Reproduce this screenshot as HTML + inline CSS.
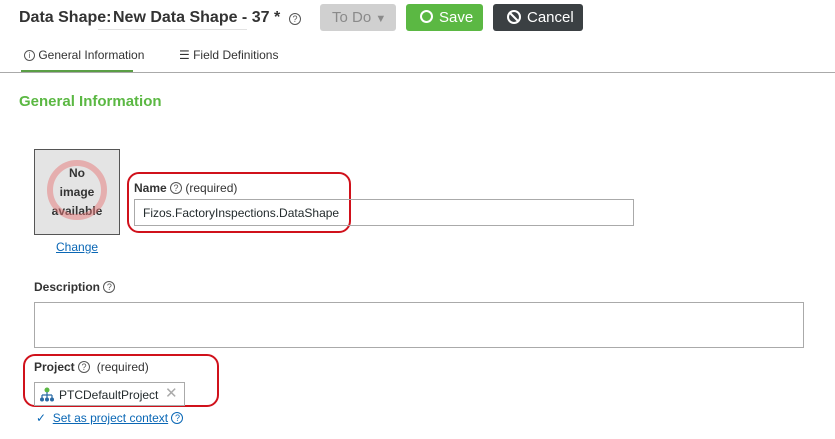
<!DOCTYPE html>
<html><head><style>
*{box-sizing:border-box}
body{margin:0;width:835px;height:439px;background:#fff;font-family:"Liberation Sans",sans-serif;color:#232b2d;position:relative;overflow:hidden}
.a{position:absolute}
.q{display:inline-block;width:12px;height:12px;border:1px solid #555;border-radius:50%;font-size:9px;line-height:10px;text-align:center;color:#555;vertical-align:1px}
.btn{position:absolute;top:4px;height:27px;border-radius:3px;font-size:15px;line-height:27px;color:#fff}
a{color:#0a67b5}
</style></head><body>
<div class="a" style="left:19px;top:9px;font-size:16px;font-weight:bold;color:#333">Data Shape:</div>
<div class="a" style="left:98px;top:8px;width:149px;height:22px;border-bottom:1px solid #e2e2e2;"></div>
<div class="a" style="left:113px;top:9px;font-size:16px;font-weight:bold;color:#333">New Data Shape - 37 *</div>
<div class="a" style="left:289px;top:10px"><span class="q">?</span></div>
<div class="btn" style="left:320px;width:76px;background:#d0d0d0;color:#8a8a8a;padding-left:12px">To Do <span style="font-size:11px">&#9660;</span></div>
<div class="btn" style="left:406px;width:77px;background:#5bb843;padding-left:14px"><span style="display:inline-block;width:13px;height:13px;border:2px solid #fff;border-radius:50%;vertical-align:-1px;margin-right:6px"></span>Save</div>
<div class="btn" style="left:493px;width:90px;background:#3b4043;padding-left:14px"><span style="display:inline-block;width:14px;height:14px;border:2px solid #fff;border-radius:50%;vertical-align:-2px;margin-right:6px;position:relative"><span style="position:absolute;left:4px;top:-1px;width:2px;height:12px;background:#fff;transform:rotate(-45deg)"></span></span>Cancel</div>
<div class="a" style="left:24px;top:48px;font-size:12px;color:#333"><span class="q" style="width:11px;height:11px;font-size:8px;line-height:9px">i</span> General Information</div>
<div class="a" style="left:179px;top:48px;font-size:12px;color:#333"><span style="font-size:12px">&#9776;</span> Field Definitions</div>
<div class="a" style="left:21px;top:70px;width:112px;height:3px;background:#5a9e45"></div>
<div class="a" style="left:0;top:72px;width:835px;height:1px;background:#aaa"></div>
<div class="a" style="left:19px;top:93px;font-size:15px;font-weight:bold;color:#5bb843">General Information</div>
<div class="a" style="left:34px;top:149px;width:86px;height:86px;border:1px solid #555;background:#e4e4e4;text-align:center;font-size:12px;font-weight:bold;color:#333;line-height:19px;padding-top:14px">
<div class="a" style="left:12px;top:10px;width:60px;height:60px;border:6px solid rgba(230,120,120,.5);border-radius:50%"></div>No<br>image<br>available</div>
<div class="a" style="left:56px;top:240px;font-size:12px"><a href="#">Change</a></div>
<div class="a" style="left:127px;top:172px;width:224px;height:61px;border:2px solid #d0111b;border-radius:12px"></div>
<div class="a" style="left:134px;top:181px;font-size:12px;color:#333"><b>Name</b> <span class="q">?</span> (required)</div>
<div class="a" style="left:134px;top:199px;width:500px;height:27px;border:1px solid #aaa;font-size:12px;padding:6px 8px">Fizos.FactoryInspections.DataShape</div>
<div class="a" style="left:34px;top:280px;font-size:12px;color:#333"><b>Description</b> <span class="q">?</span></div>
<div class="a" style="left:34px;top:302px;width:770px;height:46px;border:1px solid #aaa"></div>
<div class="a" style="left:23px;top:354px;width:196px;height:53px;border:2px solid #d0111b;border-radius:12px"></div>
<div class="a" style="left:34px;top:360px;font-size:12px;color:#333"><b>Project</b> <span class="q">?</span> &nbsp;(required)</div>
<div class="a" style="left:34px;top:382px;width:151px;height:24px;border:1px solid #aaa;font-size:12px;padding:5px 0 0 24px">PTCDefaultProject <span style="color:#aaa;font-size:15px;position:absolute;left:130px;top:1px">&#10005;</span>
<svg class="a" style="left:5px;top:4px" width="14" height="15"><circle cx="7" cy="3" r="2.5" fill="#5bb843"/><path d="M7 5v3M2 8h10M2 8v3M7 8v3M12 8v3" stroke="#2a6aa5" stroke-width="1.2" fill="none"/><circle cx="2" cy="12.5" r="2" fill="#2a6aa5"/><circle cx="7" cy="12.5" r="2" fill="#2a6aa5"/><circle cx="12" cy="12.5" r="2" fill="#2a6aa5"/></svg></div>
<div class="a" style="left:36px;top:411px;font-size:12px;color:#0a67b5">&#10003; &nbsp;<a href="#">Set as project context</a> <span class="q" style="border-color:#0a67b5;color:#0a67b5">?</span></div>
</body></html>
